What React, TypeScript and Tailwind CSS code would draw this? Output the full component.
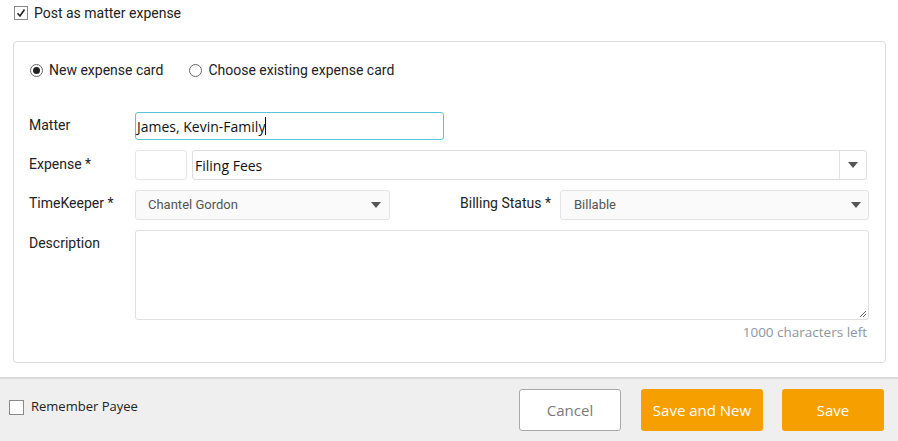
import React from "react";

function Caret() {
  return (
    <svg width="10" height="6" viewBox="0 0 10 6" className="shrink-0">
      <path d="M0 0h10L5 6z" fill="#555" />
    </svg>
  );
}

export default function App() {
  return (
    <div className="w-[898px] h-[441px] bg-white overflow-hidden flex flex-col font-['Roboto',sans-serif] text-[#222]">
      {/* Top checkbox */}
      <div className="flex items-center h-[14px] mt-[6px] pl-[14px]">
        <span className="w-[14px] h-[14px] border border-[#8a8a8a] bg-white flex items-center justify-center">
          <svg width="10" height="10" viewBox="0 0 10 10">
            <path d="M1.5 5.2 L4 8 L8.5 1.5" fill="none" stroke="#222" strokeWidth="1.6" />
          </svg>
        </span>
        <span className="ml-[6px] text-[14px] leading-none">Post as matter expense</span>
      </div>

      {/* Card */}
      <div className="mt-[21px] ml-[13px] mr-[12px] border border-[#dadada] rounded-[4px] pl-[15px] pr-[16px] pt-[20px] pb-[21px]">
        {/* Radios */}
        <div className="flex items-center h-[16px] pl-[1px] text-[14px]">
          <span className="w-[13px] h-[13px] rounded-full border border-[#666] flex items-center justify-center">
            <span className="w-[7px] h-[7px] rounded-full bg-[#222]" />
          </span>
          <span className="ml-[6px]">New expense card</span>
          <span className="ml-[26px] w-[13px] h-[13px] rounded-full border border-[#666]" />
          <span className="ml-[6px]">Choose existing expense card</span>
        </div>

        {/* Matter */}
        <div className="flex mt-[34px]">
          <div className="w-[106px] pt-[5px] text-[14px] leading-[16px]">Matter</div>
          <div className="w-[309px] h-[28px] border border-[#5bc3e0] rounded-[3px] flex items-center pl-[1px] text-[14px] font-['Open_Sans',sans-serif] text-[#111]">
            James, Kevin-Family<span className="w-px h-[18px] bg-black" />
          </div>
        </div>

        {/* Expense */}
        <div className="flex mt-[10px]">
          <div className="w-[106px] pt-[6px] text-[14px] leading-[16px]">Expense *</div>
          <div className="w-[52px] h-[30px] border border-[#e6e6e6] rounded-[3px]" />
          <div className="ml-[5px] w-[675px] h-[30px] border border-[#dedede] rounded-[3px] flex items-center">
            <span className="flex-1 pl-[2px] text-[14px] font-['Open_Sans',sans-serif] text-[#111]">Filing Fees</span>
            <span className="w-[27px] h-full border-l border-[#e3e3e3] flex items-center justify-center">
              <Caret />
            </span>
          </div>
        </div>

        {/* TimeKeeper / Billing */}
        <div className="flex mt-[10px]">
          <div className="w-[106px] pt-[5px] text-[14px] leading-[16px]">TimeKeeper *</div>
          <div className="w-[255px] h-[30px] border border-[#e3e3e3] rounded-[3px] bg-[#fafafa] flex items-center pl-[12px] pr-[8px] text-[13px] text-[#555]">
            <span className="flex-1">Chantel Gordon</span>
            <Caret />
          </div>
          <div className="w-[170px] pt-[5px] pr-[9px] text-right text-[14px] leading-[16px]">Billing Status *</div>
          <div className="w-[309px] h-[30px] border border-[#e3e3e3] rounded-[3px] bg-[#fafafa] flex items-center pl-[13px] pr-[7px] text-[13px] text-[#555]">
            <span className="flex-1">Billable</span>
            <Caret />
          </div>
        </div>

        {/* Description */}
        <div className="flex mt-[10px]">
          <div className="w-[106px] pt-[5px] text-[14px] leading-[16px]">Description</div>
          <div className="relative w-[735px] h-[90px] border border-[#e0e0e0] rounded-[3px]">
            <svg width="8" height="8" viewBox="0 0 8 8" className="absolute right-[1px] bottom-[1px]">
              <path d="M7 1 L1 7 M7 4 L4 7" stroke="#666" strokeWidth="1" />
            </svg>
          </div>
        </div>
        <div className="mt-[3px] pr-[2px] text-right text-[13.5px] leading-[18px] text-[#8d96a0] font-['Open_Sans',sans-serif]">
          1000 characters left
        </div>
      </div>

      {/* Footer */}
      <div className="mt-[14px] flex-1 border-t-2 border-[#d9d9d9] bg-[#efefef] flex items-start pt-[10px] pl-[9px] pr-[14px]">
        <div className="flex items-center h-[36px]">
          <span className="w-[15px] h-[15px] border border-[#8a8a8a] bg-white" />
          <span className="ml-[7px] text-[13px] font-['Open_Sans',sans-serif] text-[#222]">Remember Payee</span>
        </div>
        <div className="ml-auto flex text-[15px] font-['Open_Sans',sans-serif]">
          <button className="w-[102px] h-[42px] bg-white border border-[#a9a9a9] rounded-[3px] text-[#7a7a7a]">Cancel</button>
          <button className="ml-[20px] w-[122px] h-[42px] bg-[#f5a000] rounded-[3px] text-white">Save and New</button>
          <button className="ml-[19px] w-[102px] h-[42px] bg-[#f5a000] rounded-[3px] text-white">Save</button>
        </div>
      </div>
    </div>
  );
}
